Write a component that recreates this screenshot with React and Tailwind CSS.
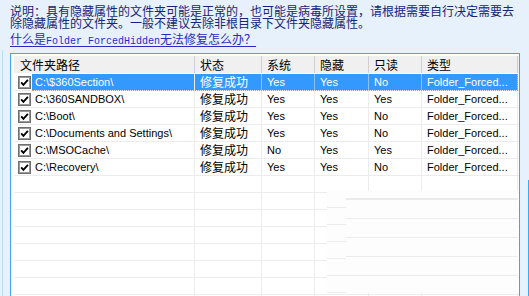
const rows = [
  ['C:\\$360Section\\', '修复成功', 'Yes', 'Yes', 'No'],
  ['C:\\360SANDBOX\\', '修复成功', 'Yes', 'Yes', 'Yes'],
  ['C:\\Boot\\', '修复成功', 'Yes', 'Yes', 'No'],
  ['C:\\Documents and Settings\\', '修复成功', 'Yes', 'Yes', 'No'],
  ['C:\\MSOCache\\', '修复成功', 'No', 'Yes', 'Yes'],
  ['C:\\Recovery\\', '修复成功', 'Yes', 'Yes', 'No'],
]

const cjk = { fontFamily: '"Noto Sans CJK SC", "Liberation Sans", sans-serif' }
const latin = { fontFamily: '"Liberation Sans", "Noto Sans CJK SC", sans-serif' }

function Check() {
  return (
    <svg width="13" height="13" viewBox="0 0 13 13" className="shrink-0">
      <rect x="0.5" y="0.5" width="12" height="12" fill="#fff" stroke="#6f6f6f" />
      <rect x="1.5" y="1.5" width="10" height="10" fill="none" stroke="#9a9a9a" />
      <path d="M3.2 6.4 L5.4 8.8 L9.9 3.9" stroke="#000" strokeWidth="1.9" fill="none" />
    </svg>
  )
}

function Row({ row, selected }) {
  const [path, status, sys, hid, ro] = row
  const cell = selected
    ? 'bg-[#3399ff] text-white border-r border-[#8cc4ff]'
    : 'text-black border-r border-[#ececec]'
  return (
    <div className="relative flex h-[17px] border-b border-[#ececec] text-[11px] leading-[16px]" style={latin}>
      <div className="w-[181px] flex border-r border-[#ececec]">
        <div className="w-[18px] flex items-center pl-[4px]">
          <Check />
        </div>
        <div className={`flex-1 pl-[3px] whitespace-nowrap ${selected ? 'bg-[#3399ff] text-white' : 'text-black'}`}>{path}</div>
      </div>
      <div className={`w-[67px] pl-[5px] text-[12px] ${cell}`} style={cjk}>{status}</div>
      <div className={`w-[53px] pl-[5px] ${cell}`}>{sys}</div>
      <div className={`w-[54px] pl-[5px] ${cell}`}>{hid}</div>
      <div className={`w-[53px] pl-[5px] ${cell}`}>{ro}</div>
      <div className={`w-[96px] pl-[5px] whitespace-nowrap ${cell}`}>Folder_Forced...</div>
      {selected && (
        <div className="absolute left-[18px] right-[1px] top-0 bottom-[-1px] border-b border-r border-dotted border-[#f08a24]" />
      )}
    </div>
  )
}

function EmptyRow() {
  return (
    <div className="flex h-[17px] border-b border-[#ececec]">
      <div className="w-[181px] border-r border-[#ececec]" />
      <div className="w-[67px] border-r border-[#ececec]" />
      <div className="w-[53px] border-r border-[#ececec]" />
      <div className="w-[54px] border-r border-[#ececec]" />
      <div className="w-[53px] border-r border-[#ececec]" />
      <div className="w-[96px] border-r border-[#ececec]" />
    </div>
  )
}

export default function App() {
  const headers = [
    ['文件夹路径', 'w-[181px] pl-[6px]'],
    ['状态', 'w-[67px] pl-[5px]'],
    ['系统', 'w-[53px] pl-[5px]'],
    ['隐藏', 'w-[54px] pl-[5px]'],
    ['只读', 'w-[53px] pl-[5px]'],
    ['类型', 'w-[96px] pl-[5px]'],
  ]

  return (
    <div className="relative w-[529px] h-[296px] overflow-hidden bg-[#e6f1fb]" style={cjk}>
      {/* description */}
      <p className="pl-[10px] pt-[5px] text-[12px] leading-[12px] text-[#16247a] whitespace-nowrap">
        说明：具有隐藏属性的文件夹可能是正常的，也可能是病毒所设置，请根据需要自行决定需要去<br />
        除隐藏属性的文件夹。一般不建议去除非根目录下文件夹隐藏属性。
      </p>
      <div className="pl-[10px] mt-[4px] text-[12px] leading-[12px] text-[#2b2bc4] whitespace-nowrap">
        <span className="underline underline-offset-[2px]">
          什么是<span className="text-[10px]" style={{ fontFamily: '"Liberation Mono", monospace' }}>Folder ForcedHidden</span>无法修复怎么办？
        </span>
      </div>

      {/* list */}
      <div className="ml-[10px] mt-[5px] w-[510px] h-[260px] border border-[#3ba9f1] bg-white pl-[3px] pt-[2px] overflow-hidden">
        <div className="flex h-[17px] bg-[#f0f0f0] text-[12px] leading-[17px] text-black">
          {headers.map(([h, c]) => (
            <div key={h} className={`${c} border-r border-[#cfcfcf]`}>{h}</div>
          ))}
        </div>
        <div className="h-px" />
        {rows.map((r, i) => (
          <Row key={r[0]} row={r} selected={i === 0} />
        ))}
        {Array(10).fill(null).map((_, i) => (
          <EmptyRow key={i} />
        ))}
      </div>

      {/* left edge line */}
      <div className="absolute left-[2px] top-[50px] bottom-0 w-px bg-[#b9def7]" />
      {/* right window edge */}
      <div className="absolute left-[528px] top-[180px] bottom-0 w-px bg-[#3ba9f1]" />

      {/* repaint glitch in lower right */}
      <div className="absolute left-[327px] top-[191px] w-[191px] h-[102px] flex bg-[#fdfdfd]">
        <div className="w-[19px]">
          {Array(6).fill(null).map((_, i) => (
            <div key={i} className="h-[17px] border-b border-[#ececec]" />
          ))}
        </div>
        <div className="flex-1 pt-[7px]">
          <div className="border-t-2 border-[#ebebeb]" />
          {Array(5).fill(null).map((_, i) => (
            <div key={i} className="h-[19px] border-b border-[#ececec]" />
          ))}
        </div>
      </div>
    </div>
  )
}
